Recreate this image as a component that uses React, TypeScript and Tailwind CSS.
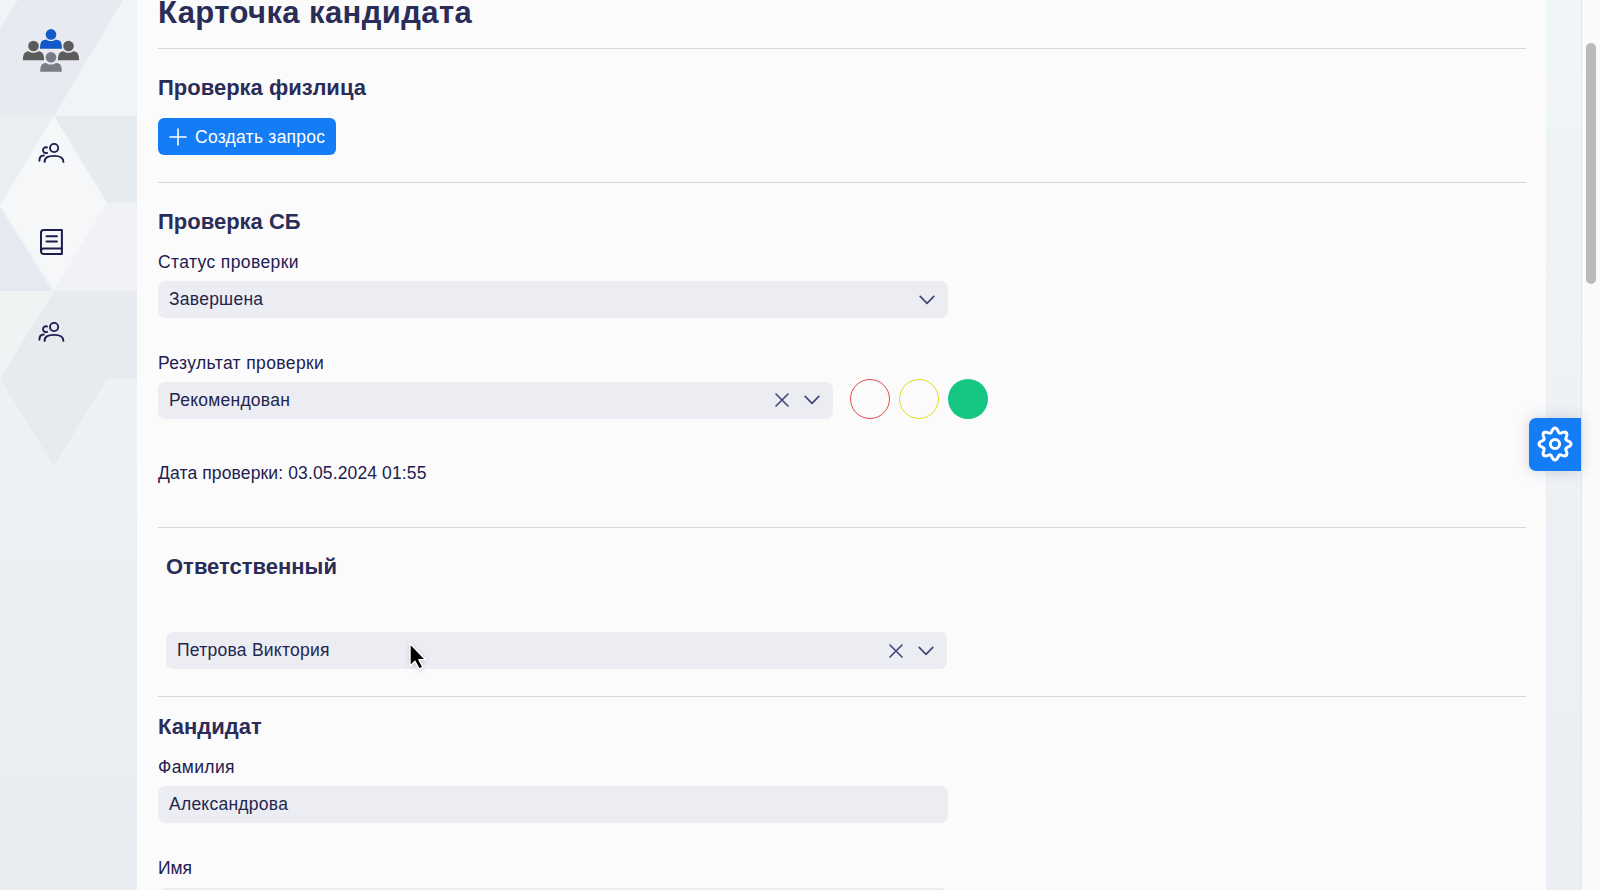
import React from 'react';

const UsersIcon = () => (
  <svg width="28" height="22" viewBox="0 0 28 22" fill="none" stroke="#1a1d4e" strokeWidth="1.9" strokeLinecap="round">
    <circle cx="16.1" cy="6" r="4.1" />
    <path d="M6.6 19.9c0-4 2.6-6 9.4-6s9.4 2 9.4 6" />
    <path d="M9 5.5a2.9 2.9 0 1 0 .1 5.3" />
    <path d="M1.4 18.7c0-3.2 1.2-5.1 4.4-5.2" />
  </svg>
);

const BookIcon = () => (
  <svg width="26" height="28" viewBox="0 0 26 28" fill="none" stroke="#1a1d4e" strokeWidth="2" strokeLinecap="round" strokeLinejoin="round">
    <path d="M5.7 2h18.2v24H5.7A2.7 2.7 0 0 1 3 23.3V4.7A2.7 2.7 0 0 1 5.7 2Z" />
    <path d="M23.9 20.6H5.7A2.7 2.7 0 0 0 3 23.3" />
    <path d="M8.5 8.2h10.4M8.5 13.6h10.4" />
  </svg>
);

const Logo = () => (
  <svg width="58" height="46" viewBox="0 0 58 46">
    <g fill="#1258c8">
      <circle cx="29" cy="6.4" r="5.3" />
      <path d="M18 20.8c0-4.5.8-7.4 2.6-8.3.9-.5 2.2-.8 3.7-1 2.6 2.1 6.8 2.1 9.4 0 1.5.2 2.8.5 3.7 1 1.8.9 2.6 3.8 2.6 8.3Z" />
    </g>
    <g fill="#5c5c5c">
      <circle cx="11.5" cy="18" r="5.3" />
      <path d="M.9 32.2c0-4.4.8-7.2 2.6-8 .9-.5 2-.8 3.3-.9 2.6 2 6.8 2 9.4 0 1.3.1 2.4.4 3.3.9 1.8.8 2.6 3.6 2.6 8Z" />
      <circle cx="46.5" cy="18" r="5.3" />
      <path d="M35.9 32.2c0-4.4.8-7.2 2.6-8 .9-.5 2-.8 3.3-.9 2.6 2 6.8 2 9.4 0 1.3.1 2.4.4 3.3.9 1.8.8 2.6 3.6 2.6 8Z" />
    </g>
    <g fill="#7b7b85">
      <circle cx="29" cy="29.3" r="5.3" />
      <path d="M18.2 43.8c0-4.4.8-7.2 2.6-8 .9-.5 2-.8 3.4-.9 2.6 2 6.9 2 9.6 0 1.4.1 2.5.4 3.4.9 1.8.8 2.6 3.6 2.6 8Z" />
    </g>
  </svg>
);

// Eight-lobed gear outline, sampled around a circle
const gearPath = Array.from({ length: 145 }, (_, i) => {
  const a = (i / 144) * Math.PI * 2;
  const r = 13.9 + 2.1 * Math.cos(8 * a);
  return `${i ? 'L' : 'M'}${(18 + r * Math.cos(a)).toFixed(2)} ${(18 + r * Math.sin(a)).toFixed(2)}`;
}).join('') + 'Z';

const GearIcon = () => (
  <svg width="36" height="36" viewBox="0 0 36 36" fill="none" stroke="#fff" strokeWidth="3" strokeLinejoin="round">
    <path d={gearPath} />
    <circle cx="18" cy="18" r="4.6" />
  </svg>
);

const Chevron = () => (
  <svg width="16" height="10" viewBox="0 0 16 10" fill="none" stroke="#41457a" strokeWidth="1.7" strokeLinecap="round" strokeLinejoin="round">
    <path d="M1.2 1.3 8 8.3l6.8-7" />
  </svg>
);

const Cross = () => (
  <svg width="14" height="14" viewBox="0 0 14 14" fill="none" stroke="#41457a" strokeWidth="1.6" strokeLinecap="round">
    <path d="M1 1l12 12M13 1 1 13" />
  </svg>
);

function Field({ value, width, clear, chevron }: { value: string; width: string; clear?: boolean; chevron?: boolean }) {
  return (
    <div className={`${width} h-[37px] shrink-0 rounded-[7px] bg-[#ecedf2] pl-[11px] pr-[13px] flex items-center`}>
      <span className="grow text-[17.5px] leading-[37px] tracking-[0.25px] text-[#23264f]">{value}</span>
      {clear && <span className="mr-[15px]"><Cross /></span>}
      {chevron && <Chevron />}
    </div>
  );
}

const Label = ({ children, tracking = 'tracking-[0.38px]' }: { children: React.ReactNode; tracking?: string }) => (
  <div className={`h-[24px] text-[17.5px] leading-[22px] text-[#1d2050] whitespace-nowrap ${tracking}`}>{children}</div>
);

const Heading = ({ children }: { children: React.ReactNode }) => (
  <h2 className="h-[30px] text-[22px] leading-[30px] font-bold text-[#2a2d57] whitespace-nowrap">{children}</h2>
);

const Divider = () => <div className="h-px shrink-0 bg-[#d5d6e2]" />;

function SidebarPattern() {
  return (
    <svg className="absolute inset-0" width="137" height="890" viewBox="0 0 137 890">
      <defs>
        <linearGradient id="base" x1="0" y1="0" x2="0" y2="1">
          <stop offset="0" stopColor="#f2f5f7" />
          <stop offset="0.5" stopColor="#edf1f3" />
          <stop offset="1" stopColor="#e9edf1" />
        </linearGradient>
      </defs>
      <path fill="url(#base)" d="M0 0h138v890H0z" />
      <path fill="#e7eaf0" d="M18 0h105L54 116H0V28z" />
      <path fill="#e9eef1" d="M0 116h54L0 205z" />
      <path fill="#e6ebef" d="M54 116h84v87h-31z" />
      <path fill="#f5f7f9" d="M54 116l53 87-53 87L0 205z" />
      <path fill="#e7e9f0" d="M0 207l52 84H0z" />
      <path fill="#f0f2f5" d="M107 203h31v88H54z" />
      <path fill="#eff3f4" d="M0 291h54L0 378z" />
      <path fill="#e7ebef" d="M54 291h84v88h-31l-53 87L0 379z" />
    </svg>
  );
}

export default function App() {
  return (
    <div className="relative flex w-[1600px] h-[890px] overflow-hidden bg-[#edf0f4] font-['Liberation_Sans',Arial,sans-serif]">
      <aside className="relative w-[137px] shrink-0">
        <SidebarPattern />
        <nav className="relative flex flex-col items-start">
          <div className="ml-[22px] mt-[28px] h-[46px]"><Logo /></div>
          <div className="ml-[38px] mt-[68px] h-[22px]"><UsersIcon /></div>
          <div className="ml-[38px] mt-[64px] h-[28px]"><BookIcon /></div>
          <div className="ml-[38px] mt-[65px] h-[22px]"><UsersIcon /></div>
        </nav>
      </aside>

      <main className="w-[1409px] shrink-0 h-[890px] overflow-hidden bg-[#fbfbfc] pl-[21px] pr-[20px] flex flex-col">
        <h1 className="h-[48px] shrink-0 text-[31px] leading-[26px] tracking-[0.4px] font-bold text-[#2a2d57] whitespace-nowrap">Карточка кандидата</h1>
        <Divider />

        <section className="h-[133px] shrink-0 pt-[24px]">
          <Heading>Проверка физлица</Heading>
          <button className="mt-[15px] w-[178px] h-[37px] rounded-[6px] bg-[#147df5] text-white flex items-center pl-[11px]">
            <svg width="18" height="18" viewBox="0 0 18 18" fill="none" stroke="#fff" strokeWidth="1.6" strokeLinecap="round">
              <path d="M9 1v16M1 9h16" />
            </svg>
            <span className="ml-[8px] text-[17.5px] leading-[36px] tracking-[0.25px] whitespace-nowrap">Создать запрос</span>
          </button>
        </section>
        <Divider />

        <section className="h-[344px] shrink-0 pt-[24px]">
          <Heading>Проверка СБ</Heading>
          <div className="mt-[14px]"><Label>Статус проверки</Label></div>
          <div className="mt-[6px]"><Field value="Завершена" width="w-[790px]" chevron /></div>
          <div className="mt-[34px]"><Label>Результат проверки</Label></div>
          <div className="mt-[3px] h-[42px] flex items-center">
            <Field value="Рекомендован" width="w-[675px]" clear chevron />
            <div className="ml-[17px] -mt-[2px] flex gap-[9px]">
              <span className="size-[40px] rounded-full border border-[#dc4a4a]" />
              <span className="size-[40px] rounded-full border border-[#e6dc1e]" />
              <span className="size-[40px] rounded-full bg-[#16c784]" />
            </div>
          </div>
          <div className="mt-[41px]"><Label tracking="tracking-[0.13px]">Дата проверки: 03.05.2024 01:55</Label></div>
        </section>
        <Divider />

        <section className="h-[168px] shrink-0 pt-[24px] pl-[8px]">
          <Heading>Ответственный</Heading>
          <div className="mt-[50px]"><Field value="Петрова Виктория" width="w-[781px]" clear chevron /></div>
        </section>
        <Divider />

        <section className="shrink-0 pt-[15px]">
          <Heading>Кандидат</Heading>
          <div className="mt-[14px]"><Label>Фамилия</Label></div>
          <div className="mt-[6px]"><Field value="Александрова" width="w-[790px]" /></div>
          <div className="mt-[34px]"><Label tracking="tracking-normal">Имя</Label></div>
          <div className="mt-[7px]"><Field value="" width="w-[790px]" /></div>
        </section>
      </main>

      <div className="w-[36px] shrink-0 border-r border-[#e2e5ec] bg-gradient-to-b from-[#f0f5f7] to-[#ebeef3]" />
      <div className="w-[18px] shrink-0 bg-[#fafafb] pt-[43px] pl-[4px]">
        <div className="w-[10px] h-[241px] rounded-full bg-[#b9b9bb]" />
      </div>

      {/* Settings tab */}
      <button className="absolute left-[1529px] top-[418px] w-[52px] h-[53px] rounded-l-[7px] bg-[#147df5] shadow-[0_0_14px_rgba(60,70,120,0.22)] flex items-start pt-[8px] justify-center">
        <GearIcon />
      </button>
      {/* Mouse pointer */}
      <svg className="absolute left-[406px] top-[640px] drop-shadow-sm" width="22" height="34" viewBox="0 0 22 34">
        <path d="M4 3.5v22.5l5-4.7 4.1 7.8 3.8-1.9-4-7.6h6.5z" fill="#000" stroke="#fff" strokeWidth="1.4" strokeLinejoin="round" />
      </svg>
    </div>
  );
}
